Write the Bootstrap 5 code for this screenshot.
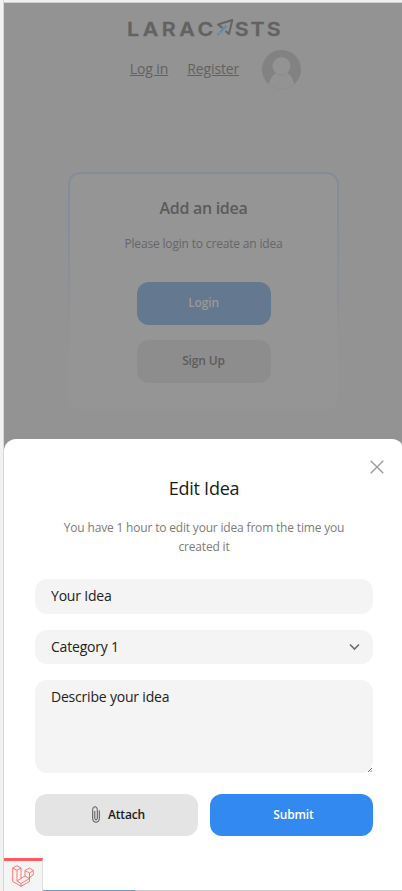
<!DOCTYPE html>
<html lang="en">
<head>
<meta charset="utf-8">
<meta name="viewport" content="width=device-width, initial-scale=1">
<title>Laracasts Voting</title>
<link href="https://cdn.jsdelivr.net/npm/bootstrap@5.3.0/dist/css/bootstrap.min.css" rel="stylesheet">
<style>
body{font-family:"Open Sans","Noto Sans",sans-serif;font-size:14px;background:#f1f3f2;color:#222;height:891px;overflow:hidden}
.frame{margin-left:3px;width:401px;height:891px;border-left:1px solid #d5d8d7;background:#939393}
.top-edge{height:3px;background:#f0f0f0;border-bottom:1px solid #d0d0d0}
.page{height:436px;color:#5f5f5f}
.logo{margin-top:13px;width:156px;height:26px}
.top-nav{height:40px;margin-top:7px;padding-left:23px}
.top-nav a{font-size:14px;line-height:20px;color:#626262;letter-spacing:-.12px}
.top-nav a+a{margin-left:19px}
.top-nav svg{margin-left:23px}
.idea-card{width:271px;height:237px;margin:83px 1px 0 0;padding:2px;border-radius:12px;background:linear-gradient(#838c99 0%,#858e99 30%,#959595 82%)}
.idea-inner{height:100%;border-radius:10px;background:#959595}
.idea-title{font-size:16px;line-height:24px;font-weight:600;color:#5b5b5b;margin:22px 0 0;letter-spacing:-.3px}
.idea-note{font-size:12px;line-height:18px;color:#666;margin:15px 0 0;letter-spacing:-.17px}
.pill{border-radius:12px;height:43px;font-size:12px;font-weight:600;padding:0 0 1px;border:0;letter-spacing:-.15px}
.idea-inner .pill{width:134px}
.pill-login{background:#64788f;color:#999;margin-top:29px}
.pill-sign{background:#8d8d8d;color:#5c5c5c;margin-top:15px}
.sheet{height:453px;background:#fff;border-radius:12px 12px 0 0;padding:17px 31px 0}
.close-row{height:20px;margin-right:-11px;padding-top:1px}
.sheet-title{font-size:18px;line-height:28px;font-weight:400;color:#1a1a1a;margin:-2px 0 0;letter-spacing:-.25px}
.sheet-note{font-size:12px;line-height:19px;color:#7c7c7c;margin:16px 10px 0;height:38px;letter-spacing:-.18px}
.field{background-color:#f4f4f4!important;border:0;border-radius:12px;font-size:14px;line-height:20px;color:#222;padding:6px 16px 8px;height:34px;letter-spacing:-.2px}
.field::placeholder{color:#222;opacity:1}
.field-1{margin-top:23px;height:35px}
.field-2{margin-top:16px;padding:7px 13px 8px 16px}
.field-3{margin-top:16px;height:93px;padding-top:7px;resize:none}
.grip{right:1px;bottom:1px}
.actions{margin-top:21px;gap:12px}
.actions .pill{height:42px;padding:0 0 1px 4px}
.pill-attach{background:#e4e4e4;color:#1a1a1a}
.pill-submit{background:#328af1;color:#fff}
.debug{margin:22px -31px 0;height:33px}
.debug-tab{width:39px;height:33px;background:#f5f5f5;border-top:3px solid #ff5a5f;border-right:1px solid #ddd}
.debug-line{height:1px;background:#ccc}
.debug-line div{width:92px;height:1px;background:#6f9fd8}
</style>
<script src="https://cdn.jsdelivr.net/npm/bootstrap@5.3.0/dist/js/bootstrap.bundle.min.js"></script>
</head>
<body>
<div class="frame overflow-hidden">
  <div class="top-edge"></div>
  <div class="page d-flex flex-column align-items-center">
    <svg class="logo" viewBox="126 16 156 26" aria-label="Laracasts">
      <g font-family="Inter" font-weight="600" font-size="19" fill="#626262" stroke="#626262" stroke-width=".3">
        <text transform="translate(127 35.500) scale(1.120 1)" textLength="77" lengthAdjust="spacing">LARAC</text>
        <text transform="translate(234.700 35.500) scale(1.120 1)" textLength="41" lengthAdjust="spacing">STS</text>
      </g>
      <path d="M222.500 28L218 24.500L232.300 20L229 34L225.500 31" fill="none" stroke="#646464" stroke-width="2" stroke-linejoin="round"/>
      <path d="M217.500 35L226.500 26" stroke="#6288a8" stroke-width="2.200" stroke-dasharray="2.500 1 9.500"/>
    </svg>
    <nav class="top-nav d-flex align-items-center">
      <a href="#">Log in</a>
      <a href="#">Register</a>
      <svg width="39" height="39" viewBox="0 0 39 39"><defs><clipPath id="round"><circle cx="19.500" cy="19.500" r="19.500"/></clipPath></defs><g clip-path="url(#round)"><rect width="39" height="39" fill="#828282"/><circle cx="19.500" cy="16" r="9" fill="#939393"/><path d="M6 39Q8 25 14 23Q19.500 28 25 23Q31 25 33 39Z" fill="#939393"/></g></svg>
    </nav>
    <section class="idea-card">
      <div class="idea-inner d-flex flex-column align-items-center overflow-hidden">
        <h2 class="idea-title">Add an idea</h2>
        <p class="idea-note">Please login to create an idea</p>
        <button class="btn pill pill-login">Login</button>
        <button class="btn pill pill-sign">Sign Up</button>
      </div>
    </section>
  </div>
  <section class="sheet">
    <div class="close-row d-flex justify-content-end align-items-center">
      <svg width="14" height="14" viewBox="0 0 14 14"><path d="M.7 .7L13.300 13.300M13.300 .7L.7 13.300" stroke="#999" stroke-width="1.300"/></svg>
    </div>
    <h1 class="sheet-title text-center">Edit Idea</h1>
    <p class="sheet-note text-center">You have 1 hour to edit your idea from the time you created it</p>
    <input class="form-control field field-1" placeholder="Your Idea">
    <div class="field field-2 d-flex justify-content-between align-items-center">
      <span>Category 1</span>
      <svg width="11" height="8" viewBox="0 0 11 8"><path d="M1 1.500L5.500 6L10 1.500" fill="none" stroke="#6f6f6f" stroke-width="1.700"/></svg>
    </div>
    <div class="position-relative">
      <textarea class="form-control field field-3" placeholder="Describe your idea"></textarea>
      <svg class="grip position-absolute" width="4" height="4" viewBox="0 0 4 4"><path d="M0 4L4 0M2.500 4L4 2.500" stroke="#444" stroke-width=".8"/></svg>
    </div>
    <div class="actions d-flex">
      <button class="btn pill pill-attach flex-fill w-50 d-flex align-items-center justify-content-center gap-2"><svg width="8" height="17" viewBox="0 0 8 17"><path d="M7.300 4.500V13Q7.300 16.300 4 16.300Q.7 16.300 .7 13V3.500Q.7 .7 3 .7Q5.300 .7 5.300 3.500V12Q5.300 14 4 14Q2.800 14 2.800 12V5" fill="none" stroke="#444" stroke-width=".9"/></svg>Attach</button>
      <button class="btn pill pill-submit flex-fill w-50">Submit</button>
    </div>
    <div class="debug d-flex align-items-end">
      <div class="debug-tab d-flex align-items-center justify-content-center">
        <svg width="22" height="22" viewBox="0 0 22 22" fill="none" stroke="#ff6b67" stroke-width=".9" stroke-linejoin="round"><path d="M.7 3L5 .7L9 3V13.500L13 11V5.500L17.500 3L21.300 5.500V10L17.500 12.300V16.500L9 21.300L.7 16.500ZM.7 3L5 5.300L9 3M5 5.300V16L9 18.500L17.500 13.500V8L21.300 5.500M13 5.500L17.500 8M17.500 8V12.300M5 16L9 13.500M13 11L17.500 13.500M9 18.500V21.300"/></svg>
      </div>
      <div class="debug-line flex-fill"><div></div></div>
    </div>
  </section>
</div>
</body>
</html>
